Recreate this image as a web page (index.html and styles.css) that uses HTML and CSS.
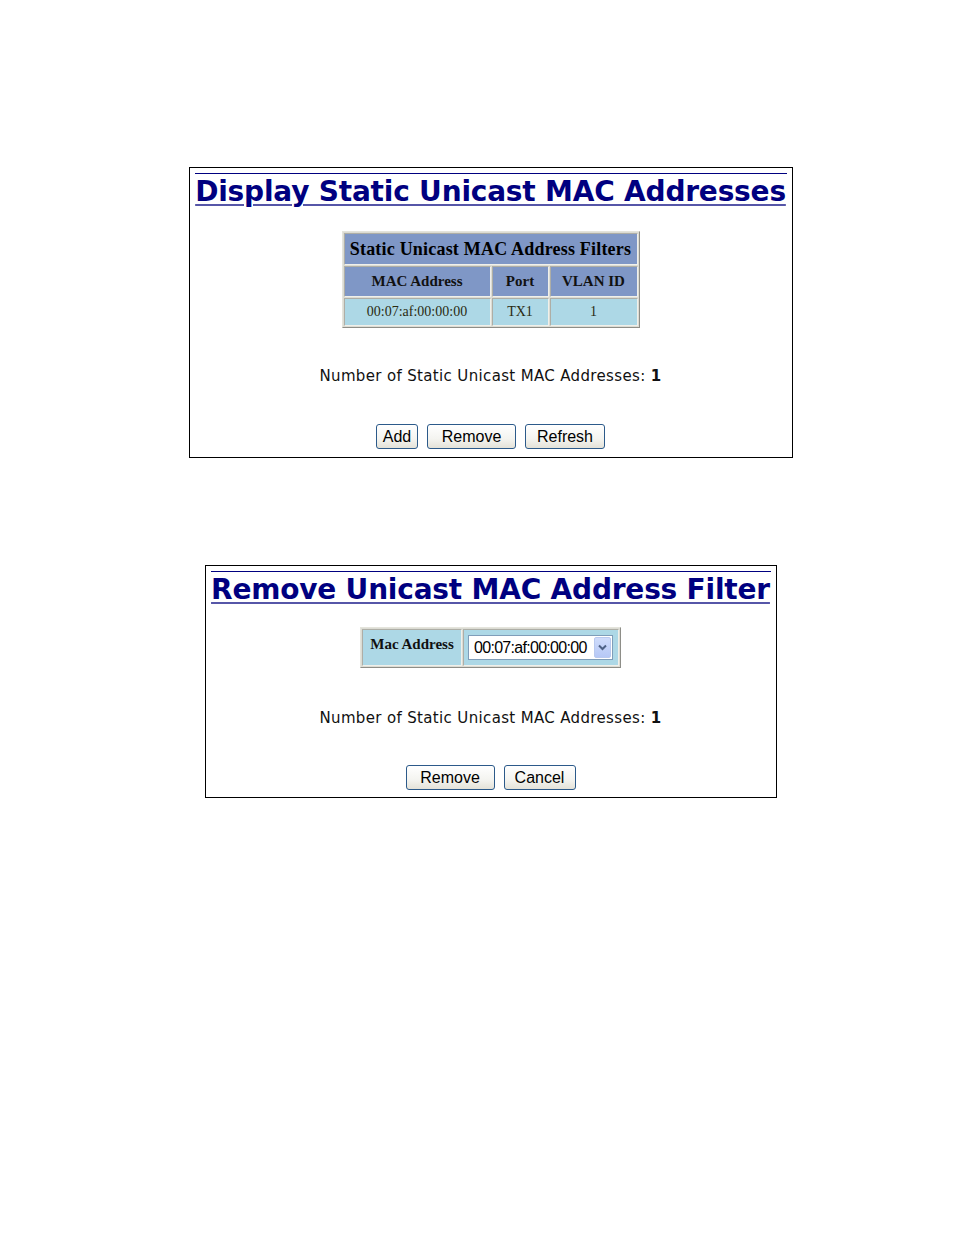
FILE: index.html
```html
<!DOCTYPE html>
<html>
<head>
<meta charset="utf-8">
<link rel="stylesheet" href="styles.css">
</head>
<body>
<div class="page">
  <section class="panel panel-display">
    <h1 class="title"><a class="title-link">Display Static Unicast MAC Addresses</a></h1>
    <table class="grid grid-display">
      <tr>
        <th class="caption-cell" colspan="3">Static Unicast MAC Address Filters</th>
      </tr>
      <tr class="head-row">
        <th class="col-mac">MAC Address</th>
        <th class="col-port">Port</th>
        <th class="col-vlan">VLAN ID</th>
      </tr>
      <tr class="data-row">
        <td>00:07:af:00:00:00</td>
        <td>TX1</td>
        <td>1</td>
      </tr>
    </table>
    <p class="count">Number of Static Unicast MAC Addresses: <b>1</b></p>
    <div class="buttons">
      <button class="btn btn-add">Add</button>
      <button class="btn btn-remove">Remove</button>
      <button class="btn btn-refresh">Refresh</button>
    </div>
  </section>

  <section class="panel panel-remove">
    <h1 class="title"><a class="title-link">Remove Unicast MAC Address Filter</a></h1>
    <table class="grid grid-remove">
      <tr>
        <th class="label-cell">Mac Address</th>
        <td class="select-cell">
          <div class="select">
            <span class="select-value">00:07:af:00:00:00</span>
            <span class="select-arrow">
              <svg width="9" height="7" viewBox="0 0 9 7"><path d="M1 1.5 L4.5 5 L8 1.5" fill="none" stroke="#4d6185" stroke-width="2"/></svg>
            </span>
          </div>
        </td>
      </tr>
    </table>
    <p class="count count-remove">Number of Static Unicast MAC Addresses: <b>1</b></p>
    <div class="buttons buttons-remove">
      <button class="btn btn-remove">Remove</button>
      <button class="btn btn-cancel">Cancel</button>
    </div>
  </section>
</div>
</body>
</html>
```
FILE: styles.css
```css
html, body {
  margin: 0;
  padding: 0;
  background: #fff;
}

.page {
  padding: 167px 0 0 27px;
  display: flex;
  flex-direction: column;
  align-items: center;
}

.panel {
  border: 1px solid #000;
  padding: 5px 5px 0;
  box-sizing: border-box;
  display: flex;
  flex-direction: column;
  align-items: center;
}

.panel-display {
  width: 604px;
  height: 291px;
}

.panel-remove {
  width: 572px;
  height: 233px;
  margin-top: 107px;
}

.title {
  margin: 0;
  align-self: stretch;
  border-top: 1px solid #000080;
  padding-top: 2px;
  font-family: "DejaVu Sans", Verdana, sans-serif;
  font-weight: bold;
  font-size: 28px;
  line-height: 32px;
  text-align: center;
  white-space: nowrap;
  letter-spacing: -0.2px;
}

.title-link {
  color: #000080;
  text-decoration: underline;
  text-decoration-color: #5656a8;
  text-decoration-thickness: 2px;
  text-underline-offset: 3px;
}

.grid {
  border-collapse: separate;
  border-spacing: 1px;
  border: 1px solid;
  border-color: #e4e4dc #8e8e88 #8e8e88 #e4e4dc;
  background: #dcdcd4;
  margin-top: 23px;
}

.grid th,
.grid td {
  border: 1px solid;
  border-color: #aeaea6 #f0f0ea #f0f0ea #aeaea6;
  padding: 0;
  font-family: "Liberation Serif", "Times New Roman", serif;
  text-align: center;
  box-sizing: border-box;
}

.caption-cell {
  background: #7f97c6;
  color: #000;
  font-size: 18px;
  font-weight: bold;
  letter-spacing: 0.2px;
  height: 32px;
}

.head-row th {
  background: #7f97c6;
  color: #111;
  font-size: 15px;
  font-weight: bold;
  height: 31px;
}

.col-mac { width: 147px; }
.col-port { width: 57px; }
.col-vlan { width: 88px; }

.data-row td {
  background: #add8e6;
  color: #2a2a10;
  font-size: 14px;
  height: 28px;
}

.grid-remove {
  margin-top: 21px;
}

.label-cell {
  background: #add8e6;
  color: #111;
  font-size: 15px;
  font-weight: bold;
  width: 100px;
  height: 37px;
  vertical-align: top;
  padding-top: 6px !important;
}

.select-cell {
  background: #add8e6;
  width: 156px;
  height: 37px;
  padding: 0 4px !important;
}

.select {
  width: 145px;
  height: 25px;
  box-sizing: border-box;
  border: 1px solid #7f9db9;
  background: #fff;
  display: flex;
  align-items: center;
  justify-content: space-between;
  padding: 0 1px 0 5px;
}

.select-value {
  font-family: "Liberation Sans", Arial, sans-serif;
  font-size: 16px;
  color: #000;
  letter-spacing: -0.7px;
}

.select-arrow {
  width: 17px;
  height: 21px;
  box-sizing: border-box;
  background: linear-gradient(#cfdcfb, #b6c8f6);
  border: 1px solid #b9c9ef;
  border-radius: 2px;
  display: flex;
  align-items: center;
  justify-content: center;
}

.count {
  margin: 40px 0 0;
  font-family: "DejaVu Sans", Verdana, sans-serif;
  font-size: 15px;
  line-height: 17px;
  color: #111;
  text-align: center;
  letter-spacing: 0.35px;
}

.count-remove {
  margin-top: 42px;
}

.count b {
  font-weight: bold;
}

.buttons {
  margin-top: 39px;
  display: flex;
  gap: 9px;
}

.buttons-remove {
  margin-top: 38px;
}

.btn {
  height: 25px;
  box-sizing: border-box;
  border: 1px solid #2c5a8a;
  border-radius: 3px;
  background: linear-gradient(#ffffff 0%, #f4f4f0 60%, #e4e2d8 100%);
  font-family: "Liberation Sans", Arial, sans-serif;
  font-size: 16px;
  color: #000;
  padding: 0;
  text-align: center;
}

.btn-add { width: 42px; }
.btn-remove { width: 89px; }
.btn-refresh { width: 80px; }
.btn-cancel { width: 72px; }
```
